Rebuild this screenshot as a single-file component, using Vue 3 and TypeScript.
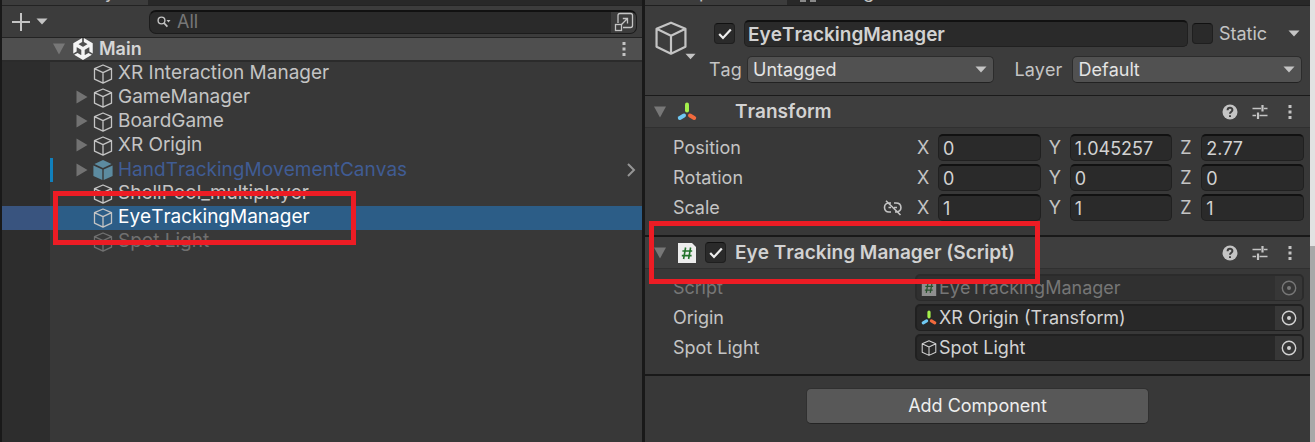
<script setup lang="ts">
import { reactive, ref } from 'vue'

interface TreeItem {
  name: string
  kind: 'plain' | 'prefab' | 'disabled'
  expandable: boolean
}
interface Axis {
  axis: string
  value: string
}
interface VectorRow {
  label: string
  unlinked: boolean
  axes: Axis[]
}
interface ObjectRow {
  label: string
  value: string
  icon: 'script' | 'transform' | 'cube'
  disabled: boolean
}

const tree: TreeItem[] = [
  { name: 'XR Interaction Manager', kind: 'plain', expandable: false },
  { name: 'GameManager', kind: 'plain', expandable: true },
  { name: 'BoardGame', kind: 'plain', expandable: true },
  { name: 'XR Origin', kind: 'plain', expandable: true },
  { name: 'HandTrackingMovementCanvas', kind: 'prefab', expandable: true },
  { name: 'ShellPool_multiplayer', kind: 'plain', expandable: false },
  { name: 'EyeTrackingManager', kind: 'plain', expandable: false },
  { name: 'Spot Light', kind: 'disabled', expandable: false },
]
const selected = ref('EyeTrackingManager')
const search = ref('')
const objectName = ref('EyeTrackingManager')
const active = ref(true)
const isStatic = ref(false)
const scriptEnabled = ref(true)

function axes(x: string, y: string, z: string): Axis[] {
  return [
    { axis: 'X', value: x },
    { axis: 'Y', value: y },
    { axis: 'Z', value: z },
  ]
}
const vectors = reactive<VectorRow[]>([
  { label: 'Position', unlinked: false, axes: axes('0', '1.045257', '2.77') },
  { label: 'Rotation', unlinked: false, axes: axes('0', '0', '0') },
  { label: 'Scale', unlinked: true, axes: axes('1', '1', '1') },
])
const objects: ObjectRow[] = [
  { label: 'Script', value: 'EyeTrackingManager', icon: 'script', disabled: true },
  { label: 'Origin', value: 'XR Origin (Transform)', icon: 'transform', disabled: false },
  { label: 'Spot Light', value: 'Spot Light', icon: 'cube', disabled: false },
]
</script>

<template>
  <svg class="defs" aria-hidden="true">
    <symbol id="cube" viewBox="0 0 20 20">
      <path d="M10 1 18.5 4.6V15.2L10 19.2 1.5 15.2V4.6Z M1.5 4.6 10 8.7 18.5 4.6 M10 8.7V19.2" fill="none" stroke="currentColor" stroke-width="1.3" stroke-linejoin="round" />
    </symbol>
    <symbol id="prefab" viewBox="0 0 20 20">
      <path d="M10 0 18.6 4 10 8 1.4 4Z M0.4 5.4 9.3 9.4V20L0.4 16Z M19.6 5.4 10.7 9.4V20L19.6 16Z" fill="currentColor" />
    </symbol>
    <symbol id="axes" viewBox="0 0 20 20">
      <path d="M10 2.5V8.5" stroke="#a4f04c" stroke-width="4" stroke-linecap="round" />
      <path d="M7 13.6 2.8 16" stroke="#6fc8f2" stroke-width="4" stroke-linecap="round" />
      <path d="M13 13.6 17.2 16" stroke="#f26a3d" stroke-width="4" stroke-linecap="round" />
    </symbol>
    <symbol id="script" viewBox="0 0 18 20">
      <path d="M0 0H14L18 4V20H0Z" fill="#ededed" />
      <path d="M7.6 4.5 5.6 16 M12.6 4.5 10.6 16 M4.4 8H14.2 M3.8 12.6H13.6" fill="none" stroke="#23732b" stroke-width="1.6" />
    </symbol>
    <symbol id="down" viewBox="0 0 12 7"><path d="M0.5 0.5H11.5L6 6.5Z" fill="currentColor" /></symbol>
    <symbol id="fold" viewBox="0 0 12 12"><path d="M0 0.5H12L6 11.5Z" fill="currentColor" /></symbol>
    <symbol id="dots" viewBox="0 0 4 16">
      <path d="M0.5 1h3v3h-3z M0.5 6.5h3v3h-3z M0.5 12h3v3h-3z" fill="currentColor" />
    </symbol>
    <symbol id="help" viewBox="0 0 16 16">
      <circle cx="8" cy="8" r="7.5" fill="currentColor" />
      <path d="M5.6 6.2C5.6 3 10.4 3 10.4 6.1 10.4 7.8 8 7.8 8 9.8M8 11.2V13" fill="none" stroke="#3e3e3e" stroke-width="2" />
    </symbol>
    <symbol id="preset" viewBox="0 0 16 16">
      <path d="M0.5 4.5H9 M12 4.5H15.5 M0.5 11.5H4 M7.5 11.5H15.5" fill="none" stroke="currentColor" stroke-width="1.3" />
      <path d="M10.5 1V7.6M6 8.4V15" stroke="currentColor" stroke-width="2.2" />
    </symbol>
    <symbol id="check" viewBox="0 0 14 12">
      <path d="M1.2 6 5 10 12.8 1.5" fill="none" stroke="#ededed" stroke-width="2.2" />
    </symbol>
    <symbol id="target" viewBox="0 0 16 16">
      <circle cx="8" cy="8" r="6.7" fill="none" stroke="currentColor" stroke-width="1.4" />
      <circle cx="8" cy="8" r="2" fill="currentColor" />
    </symbol>
  </svg>

  <main class="editor">
    <section class="hierarchy">
      <div class="tabs"><div class="tab tab-hierarchy">Hierarchy</div></div>
      <div class="toolbar">
        <button class="bare add" aria-label="Create">
          <svg width="18" height="18" viewBox="0 0 18 18"><path d="M9 0V18M0 9H18" stroke="currentColor" stroke-width="2" /></svg>
          <svg width="12" height="7"><use href="#down" /></svg>
        </button>
        <div class="search">
          <svg width="14" height="12" viewBox="0 0 14 12">
            <circle cx="4.5" cy="4.5" r="3.4" fill="none" stroke="currentColor" stroke-width="1.4" />
            <path d="M7 7 10.4 10.6" stroke="currentColor" stroke-width="1.8" />
            <path d="M9.5 4H13.5L11.5 6.5Z" fill="currentColor" />
          </svg>
          <input v-model="search" placeholder="All" aria-label="Search hierarchy" />
          <button class="bare popout" aria-label="Open search">
            <svg width="20" height="20" viewBox="0 0 20 20" fill="none" stroke="currentColor" stroke-width="1.3">
              <path d="M4 11V3.5Q4 1.5 6 1.5H16.5Q18.5 1.5 18.5 3.5V13.5Q18.5 15.5 16.5 15.5H9" />
              <rect x="1.5" y="12.5" width="6" height="6" />
              <path d="M7.5 12.5 13.5 6.5M8.8 6.5H13.5V11.5" />
            </svg>
          </button>
        </div>
      </div>
      <div class="scene">
        <button class="bare fold" aria-label="Collapse Main"><svg width="12" height="12"><use href="#fold" /></svg></button>
        <svg class="unity" width="22" height="22" viewBox="0 0 24 24">
          <path d="m12.9288 4.2939 3.7997 2.1929c.1366.077.1415.2905 0 .3675l-4.515 2.6076a.4192.4192 0 0 1-.4246 0L7.274 6.8543c-.139-.0745-.1415-.293 0-.3675l3.7972-2.193V0L1.3758 5.5977V16.793l3.7177-2.1456v-4.3858c-.0025-.1565.1813-.2682.318-.1838l4.5148 2.6076a.4252.4252 0 0 1 .2136.3676v5.2127c.0025.1565-.1813.2682-.3179.1838l-3.7996-2.1929-3.7178 2.1457L12 24l9.6954-5.5977-3.7178-2.1457-3.7996 2.1929c-.1341.082-.3229-.0248-.3179-.1838V13.053c0-.1565.087-.2956.2136-.3676l4.5149-2.6076c.134-.082.3228.0224.3179.1838v4.3858l3.7177 2.1456V5.5977L12.9288 0Z" fill="#f4f4f4" />
        </svg>
        <strong>Main</strong>
        <button class="bare more" aria-label="Scene menu"><svg width="4" height="16"><use href="#dots" /></svg></button>
      </div>
      <div class="tree-area">
        <ul class="tree">
          <li v-for="item in tree" :key="item.name" :class="[item.kind, { selected: item.name === selected }]" @click="selected = item.name">
            <span class="gutter"></span>
            <span class="row-body">
              <span class="arrow"><svg v-if="item.expandable" width="12" height="14" viewBox="0 0 12 14"><path d="M0.5 0.5 11.5 7 0.5 13.5Z" fill="#727272" /></svg></span>
              <svg class="node" width="20" height="20"><use :href="item.kind === 'prefab' ? '#prefab' : '#cube'" /></svg>
              <span class="name">{{ item.name }}</span>
              <svg v-if="item.kind === 'prefab'" class="open" width="9" height="14" viewBox="0 0 9 14"><path d="M1 1 7 7 1 13" fill="none" stroke="#959595" stroke-width="2" /></svg>
            </span>
          </li>
        </ul>
        <div class="mark mark-tree"></div>
      </div>
    </section>

    <section class="inspector">
      <div class="tabs">
        <div class="tab tab-inspector">Inspector</div>
        <div class="tab-other"><span class="tab-icon"></span>Navigation</div>
      </div>
      <header class="object">
        <button class="bare object-icon" aria-label="Select icon">
          <svg width="34" height="34" viewBox="0 0 20 20"><use href="#cube" /></svg>
          <svg class="object-caret" width="11" height="7"><use href="#down" /></svg>
        </button>
        <div class="object-rows">
          <div class="name-row">
            <label class="check"><input v-model="active" type="checkbox" aria-label="Active" /><svg v-if="active" width="14" height="12"><use href="#check" /></svg></label>
            <input v-model="objectName" class="field object-name" aria-label="Object name" />
            <label class="check"><input id="static" v-model="isStatic" type="checkbox" /><svg v-if="isStatic" width="14" height="12"><use href="#check" /></svg></label>
            <label class="static-label" for="static">Static</label>
            <button class="bare static-caret" aria-label="Static options"><svg width="12" height="7"><use href="#down" /></svg></button>
          </div>
          <div class="tag-row">
            <label for="tag">Tag</label>
            <span class="select tag"><select id="tag"><option>Untagged</option></select><svg width="12" height="7"><use href="#down" /></svg></span>
            <label class="layer-label" for="layer">Layer</label>
            <span class="select layer"><select id="layer"><option>Default</option></select><svg width="12" height="7"><use href="#down" /></svg></span>
          </div>
        </div>
      </header>

      <section class="component">
        <div class="component-head">
          <button class="bare fold" aria-label="Collapse Transform"><svg width="12" height="12"><use href="#fold" /></svg></button>
          <svg class="component-icon" width="20" height="20"><use href="#axes" /></svg>
          <span class="toggle-slot"></span>
          <h2>Transform</h2>
          <button class="bare" aria-label="Help"><svg width="16" height="16"><use href="#help" /></svg></button>
          <button class="bare" aria-label="Presets"><svg width="16" height="16"><use href="#preset" /></svg></button>
          <button class="bare" aria-label="More"><svg width="4" height="16"><use href="#dots" /></svg></button>
        </div>
        <div class="props">
          <div v-for="row in vectors" :key="row.label" class="prop">
            <span class="prop-label">{{ row.label }}
              <svg v-if="row.unlinked" width="20" height="16" viewBox="0 0 20 16" fill="none" stroke="currentColor" stroke-width="1.6">
                <path d="M8 3H6C0 3 0 12 6 12H8M11 3H13C19.5 3 19.5 12 13.5 12H12M5.5 7.5H8M11 7.5H14M3 0.8 17.5 15" />
              </svg>
            </span>
            <div class="vector">
              <label v-for="a in row.axes" :key="a.axis"><span>{{ a.axis }}</span><input v-model="a.value" class="field" /></label>
            </div>
          </div>
        </div>
      </section>

      <section class="component scripted">
        <div class="component-head">
          <button class="bare fold" aria-label="Collapse Eye Tracking Manager"><svg width="12" height="12"><use href="#fold" /></svg></button>
          <svg class="component-icon" width="20" height="20"><use href="#script" /></svg>
          <span class="toggle-slot">
            <label class="check"><input v-model="scriptEnabled" type="checkbox" aria-label="Enabled" /><svg v-if="scriptEnabled" width="14" height="12"><use href="#check" /></svg></label>
          </span>
          <h2>Eye Tracking Manager (Script)</h2>
          <button class="bare" aria-label="Help"><svg width="16" height="16"><use href="#help" /></svg></button>
          <button class="bare" aria-label="Presets"><svg width="16" height="16"><use href="#preset" /></svg></button>
          <button class="bare" aria-label="More"><svg width="4" height="16"><use href="#dots" /></svg></button>
        </div>
        <div class="props">
          <div v-for="row in objects" :key="row.label" class="prop" :class="{ off: row.disabled }">
            <span class="prop-label">{{ row.label }}</span>
            <div class="object-field">
              <svg width="16" height="16"><use :href="row.icon === 'script' ? '#script' : row.icon === 'transform' ? '#axes' : '#cube'" /></svg>
              <span>{{ row.value }}</span>
              <button class="bare picker" :disabled="row.disabled" :aria-label="'Pick ' + row.label"><svg width="16" height="16"><use href="#target" /></svg></button>
            </div>
          </div>
        </div>
        <div class="mark mark-script"></div>
      </section>

      <footer><button class="add-component">Add Component</button></footer>
    </section>
    <div class="scrollbar"></div>
  </main>
</template>

<style>
body {
  background: #383838;
}
</style>

<style scoped>
.defs {
  position: absolute;
  width: 0;
  height: 0;
}
.editor,
.editor * {
  box-sizing: border-box;
}
.editor {
  display: flex;
  min-height: 100vh;
  background: #383838;
  color: #c4c4c4;
  font: 18px/24px Inter, sans-serif;
  font-kerning: none;
}
.editor input,
.editor select,
.editor button {
  font: inherit;
  font-kerning: none;
  color: inherit;
}
svg {
  display: block;
  flex: none;
}
.bare {
  display: flex;
  align-items: center;
  padding: 0;
  border: 0;
  background: none;
}
.hierarchy {
  display: flex;
  flex: 640 1 0;
  flex-direction: column;
  min-width: 0;
  border-left: 2px solid #191919;
  border-right: 3px solid #191919;
}
.inspector {
  flex: 665 1 0;
  min-width: 0;
}
.scrollbar {
  width: 5px;
  background: linear-gradient(#e2e2e2 246px, #a8a8a8 246px);
}

.tabs {
  display: flex;
  align-items: flex-end;
  height: 6px;
  overflow: hidden;
  background: #282828;
  border-bottom: 1px solid #1f1f1f;
}
.hierarchy .tabs {
  border-color: #232323;
}
.tab {
  padding-bottom: 3px;
  background: #3c3c3c;
  line-height: 20px;
}
.tab-hierarchy {
  width: 146px;
  padding-left: 30px;
}
.tab-inspector {
  width: 142px;
  padding-left: 29px;
}
.tab-other {
  display: flex;
  align-items: flex-end;
  gap: 9px;
  padding: 0 0 3px 13px;
  line-height: 20px;
}
.tab-icon {
  width: 16px;
  height: 18px;
  border: solid #8a8a8a;
  border-width: 0 6px;
}

.toolbar {
  display: flex;
  align-items: center;
  height: 32px;
  padding: 0 5px 0 10px;
  background: #3c3c3c;
  border-bottom: 1px solid #232323;
}
.add {
  gap: 6px;
  width: 137px;
}
.search {
  display: flex;
  flex: 1;
  align-items: center;
  height: 24px;
  padding-left: 7px;
  overflow: hidden;
  background: #2a2a2a;
  border: 1px solid #1c1c1c;
  border-top: 2px solid #111;
  border-radius: 7px;
}
.search input {
  flex: 1;
  min-width: 0;
  padding: 0 6px;
  border: 0;
  outline: 0;
  background: none;
}
.search input::placeholder {
  color: #777;
  opacity: 1;
}
.popout {
  width: 25px;
  height: 22px;
  justify-content: center;
  background: #3c3c3c;
}
.scene {
  display: flex;
  align-items: center;
  height: 24px;
  padding-left: 51px;
  background: #4f4f4f;
  border-bottom: 2px solid #2b2b2b;
}
.editor .fold {
  color: #777;
}
.unity {
  margin: 0 5px 0 7px;
}
.scene strong {
  font-weight: 600;
  color: #d6d6d6;
}
.more {
  margin: 0 16px 0 auto;
}
.tree-area {
  position: relative;
  flex: 1;
  background: linear-gradient(90deg, #2d2d2d 48px, #383838 48px);
}
.tree {
  margin: 0;
  padding: 0;
  list-style: none;
  font-size: 19px;
}
.tree li {
  display: flex;
  height: 24px;
}
.gutter {
  width: 48px;
}
.row-body {
  display: flex;
  flex: 1;
  align-items: center;
  padding: 0 6px 2px 26px;
  min-width: 0;
}
.arrow {
  width: 12px;
}
.node {
  margin: 2px 5px 0 5px;
}
.prefab .row-body {
  padding: 0 6px 0 23px;
  border-left: 3px solid #1080bd;
}
.prefab .node {
  margin-top: 0;
  color: #5c8ba0;
}
.prefab .name {
  color: #405c94;
}
.open {
  margin-left: auto;
}
.disabled {
  color: #707070;
}
.selected {
  color: #fff;
}
.selected .gutter {
  background: #39547f;
}
.selected .row-body {
  background: #2c5d87;
}
.selected .node {
  color: #c4c4c4;
}
.mark {
  position: absolute;
  border: 5px solid #ed1c24;
  pointer-events: none;
}
.mark-tree {
  top: 129px;
  left: 51px;
  width: 303px;
  height: 54px;
}

.object {
  display: flex;
  height: 90px;
  padding: 14px 8px 0 9px;
  background: #3c3c3c;
  border-bottom: 1px solid #1a1a1a;
}
.object-icon {
  position: relative;
  width: 55px;
  height: 36px;
}
.object-caret {
  position: absolute;
  left: 31px;
  top: 33px;
}
.object-rows {
  flex: 1;
  min-width: 0;
}
.name-row,
.tag-row {
  display: flex;
  align-items: center;
  height: 27px;
}
.name-row {
  margin-bottom: 9px;
  padding-left: 5px;
}
.check {
  display: grid;
  place-items: center;
  width: 21px;
  height: 21px;
}
.check > * {
  grid-area: 1 / 1;
  pointer-events: none;
}
.check input {
  appearance: none;
  width: 21px;
  height: 21px;
  margin: 0;
  background: #2a2a2a;
  border: 1px solid #1f1f1f;
  border-top-color: #111;
  border-radius: 4px;
  pointer-events: auto;
}
.field {
  height: 27px;
  min-width: 0;
  padding: 0 4px;
  background: #2a2a2a;
  border: 1px solid #202020;
  border-top: 2px solid #111;
  border-radius: 5px;
  outline: 0;
}
.editor .object-name {
  flex: 1;
  margin: 0 4px 0 9px;
  padding: 0 3px;
  font-size: 19px;
  font-weight: 600;
  color: #d2d2d2;
}
.static-label {
  width: 69px;
  margin-left: 6px;
}
.static-caret {
  width: 14px;
}
.tag-row > label {
  width: 38px;
}
.tag-row > .layer-label {
  width: 58px;
  margin-left: 20px;
}
.select {
  display: grid;
  align-items: center;
  min-width: 0;
}
.select > * {
  grid-area: 1 / 1;
}
.tag {
  flex: 248 1 0;
}
.layer {
  flex: 230 1 0;
}
.select select {
  appearance: none;
  width: 100%;
  height: 27px;
  padding: 0 24px 0 5px;
  background: #515151;
  border: 1px solid #2c2c2c;
  border-bottom-color: #222;
  border-radius: 5px;
  outline: 0;
  color: #e4e4e4;
}
.select svg {
  justify-self: end;
  margin-right: 7px;
  pointer-events: none;
}

.component {
  position: relative;
  border-bottom: 2px solid #191919;
}
.component-head {
  display: flex;
  align-items: center;
  gap: 14px;
  height: 32px;
  padding: 0 18px 0 9px;
  background: #3e3e3e;
  border-bottom: 1px solid #303030;
}
.component-head .fold {
  margin-right: -3px;
}
.component-head .component-icon {
  margin-right: -6px;
}
.toggle-slot {
  width: 22px;
  margin-right: -6px;
}
.component-head h2 {
  flex: 1;
  margin: 0;
  font-size: 19px;
  font-weight: 600;
  color: #d2d2d2;
}
.component-head .bare + .bare:last-child {
  margin-left: 6px;
}
.props {
  display: grid;
  gap: 3px;
  padding: 6px 6px 14px 28px;
}
.scripted .props {
  padding-top: 5px;
  padding-bottom: 13px;
}
.prop {
  display: grid;
  grid-template-columns: 242fr 389fr;
  align-items: center;
}
.prop-label {
  display: flex;
  align-items: center;
  justify-content: space-between;
  padding-right: 12px;
}
.vector {
  display: grid;
  grid-template-columns: repeat(3, 1fr);
  gap: 8px;
  padding-left: 2px;
}
.vector label {
  display: flex;
  align-items: center;
}
.vector span {
  width: 21px;
}
.vector input {
  flex: 1;
  width: 0;
  color: #d2d2d2;
}
.object-field {
  display: flex;
  align-items: center;
  height: 27px;
  padding-left: 4px;
  overflow: hidden;
  background: #282828;
  border: 2px solid #202020;
  border-bottom-width: 1px;
  border-radius: 5px;
  color: #d2d2d2;
}
.object-field span {
  flex: 1;
  margin-left: 2px;
}
.picker {
  justify-content: center;
  width: 27px;
  height: 100%;
  background: #373737;
}
.off .prop-label,
.off .object-field,
.editor .off .picker {
  color: #767676;
}
.off .object-field {
  background: #303030;
  border-color: #2b2b2b;
}
.off .object-field > svg {
  opacity: 0.5;
}
.mark-script {
  top: -16px;
  left: 4px;
  width: 391px;
  height: 63px;
}
footer {
  display: flex;
  justify-content: center;
  padding: 12px 0 18px;
}
.editor .add-component {
  width: 343px;
  height: 36px;
  background: #585858;
  border: 1px solid #303030;
  border-bottom-color: #242424;
  border-radius: 5px;
  color: #eee;
}
</style>
